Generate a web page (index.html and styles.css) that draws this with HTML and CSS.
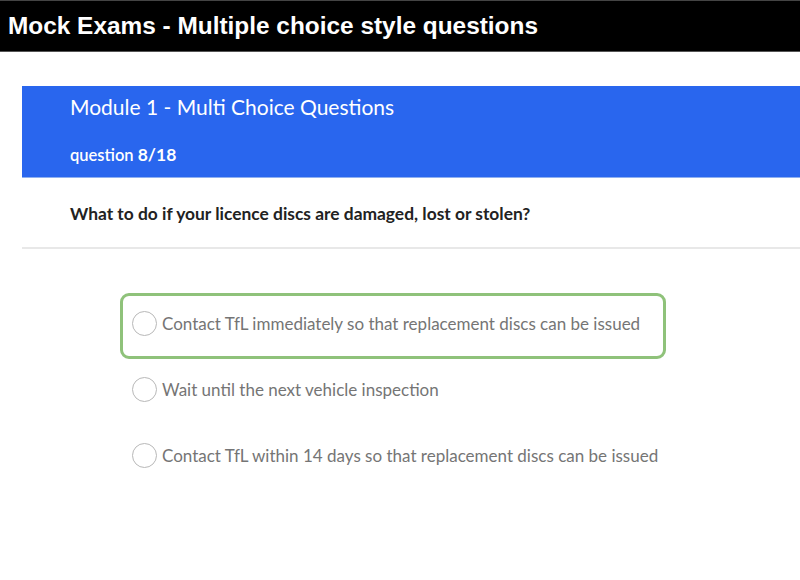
FILE: index.html
```html
<!DOCTYPE html>
<html lang="en">
<head>
<meta charset="utf-8">
<title>Mock Exams</title>
<link rel="stylesheet" href="styles.css">
</head>
<body>
<header class="topbar">
  <h1 class="topbar-title">Mock Exams - Multiple choice style questions</h1>
</header>
<main class="quiz">
  <section class="quiz-head">
    <h2 class="module-title">Module 1 - Multi Choice Questions</h2>
    <p class="counter">question <b>8/18</b></p>
  </section>
  <section class="question">
    <p class="question-text">What to do if your licence discs are damaged, lost or stolen?</p>
  </section>
  <ul class="options">
    <li class="option selected"><span class="radio"></span><span class="label">Contact TfL immediately so that replacement discs can be issued</span></li>
    <li class="option"><span class="radio"></span><span class="label">Wait until the next vehicle inspection</span></li>
    <li class="option"><span class="radio"></span><span class="label">Contact TfL within 14 days so that replacement discs can be issued</span></li>
  </ul>
</main>
</body>
</html>
```
FILE: styles.css
```css
* { box-sizing: border-box; }
html, body { margin: 0; padding: 0; background: #fff; }
body { width: 800px; height: 580px; overflow: hidden; font-family: "Lato", "Liberation Sans", sans-serif; }

.topbar {
  height: 52px;
  background: #000;
  border-top: 1px solid #444;
  border-bottom: 1px solid #555;
  display: flex;
  align-items: center;
  padding-left: 8px;
}
.topbar-title {
  margin: 0;
  font-family: "Liberation Sans", Arial, sans-serif;
  font-weight: bold;
  font-size: 24.4px;
  color: #fff;
}

.quiz { margin-top: 34px; margin-left: 22px; }

.quiz-head {
  background: #2966ee;
  height: 92px;
  padding: 7px 0 0 48px;
  border-bottom: 1px solid #8fb0f0;
}
.module-title {
  margin: 0;
  font-weight: 400;
  font-size: 21px;
  color: #fff;
  line-height: 28px;
}
.counter {
  margin: 23px 0 0;
  font-size: 16.5px;
  font-weight: 600;
  color: #fff;
}
.counter b { font-weight: 700; font-size: 17.5px; }

.question {
  height: 71px;
  border-bottom: 2px solid #e8e8e8;
  padding: 25px 0 0 48px;
}
.question-text {
  margin: 0;
  font-size: 17.4px;
  font-weight: 700;
  color: #222;
}

.options {
  list-style: none;
  margin: 44px 0 0 98px;
  padding: 0;
  display: flex;
  flex-direction: column;
}
.option {
  width: 546px;
  height: 66px;
  display: flex;
  align-items: flex-start;
  padding: 15px 0 0 9px;
  border: 3px solid transparent;
  border-radius: 9px;
}
.option.selected { border-color: #8fc27a; }
.radio {
  width: 25px;
  height: 25px;
  border: 1px solid #b8b8b8;
  border-radius: 50%;
  flex: none;
  margin-right: 5px;
}
.label {
  font-size: 17px;
  line-height: 25px;
  color: #757575;
}
```
